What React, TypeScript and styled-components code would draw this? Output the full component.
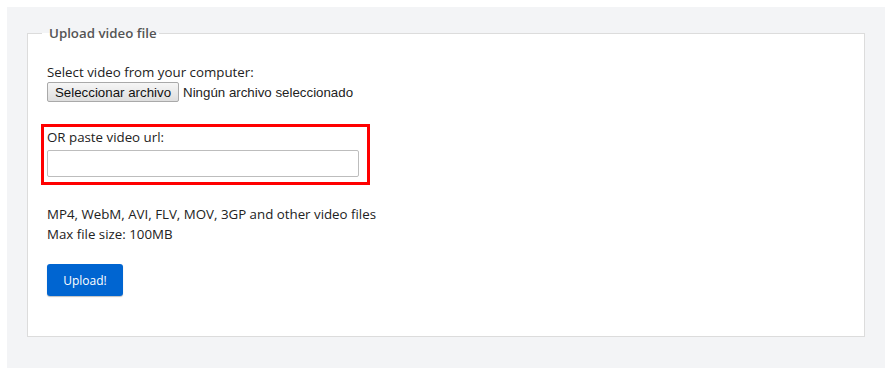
import styled, { createGlobalStyle } from 'styled-components';

const GlobalStyle = createGlobalStyle`
  body {
    margin: 7px 8px 7px 7px;
    background: #fff;
    font-family: 'Open Sans', 'Noto Sans', sans-serif;
    color: #222;
  }
`;

const Panel = styled.div`
  background: #f3f4f6;
  padding: 17px 20px 31px 20px;
`;

const Fieldset = styled.fieldset`
  margin: 0;
  background: #fff;
  border: 1px solid #dcdcdc;
  padding: 20px 19px 40px 19px;
`;

const Legend = styled.legend`
  margin-left: -5px;
  padding: 0 2px 0 7px;
  font-size: 13.3px;
  font-weight: 600;
  color: #555;
`;

const Line = styled.div`
  font-size: 13.3px;
  line-height: 20px;
`;

const FileRow = styled.div`
  display: flex;
  align-items: center;
  gap: 4px;
  font-family: 'Liberation Sans', Arial, sans-serif;
  font-size: 13.3px;
`;

const FileButton = styled.button`
  font-family: 'Liberation Sans', Arial, sans-serif;
  font-size: 13.3px;
  height: 20px;
  padding: 0 7px;
  border: 1px solid #a9a9a9;
  border-radius: 2px;
  background: linear-gradient(#f6f6f6, #dedede);
  color: #111;
`;

const Highlight = styled.div`
  margin: 22px 0 0 -6px;
  width: 312px;
  border: 3px solid #f00;
  padding: 0 8px 5px 3px;
`;

const UrlInput = styled.input`
  display: block;
  box-sizing: border-box;
  width: 100%;
  height: 27px;
  margin-top: 3px;
  border: 1px solid #bdbdbd;
  border-radius: 2px;
`;

const Notes = styled.div`
  margin-top: 19px;
`;

const UploadButton = styled.button`
  margin-top: 20px;
  width: 76px;
  height: 32px;
  background: #0065d1;
  border: none;
  border-radius: 3px;
  color: #fff;
  font-family: 'Open Sans', 'Noto Sans', sans-serif;
  font-size: 12px;
  box-shadow: 0 1px 1px rgba(0, 0, 0, 0.25);
`;

export default function App() {
  return (
    <>
      <GlobalStyle />
      <Panel>
        <Fieldset>
          <Legend>Upload video file</Legend>
          <Line>Select video from your computer:</Line>
          <FileRow>
            <FileButton>Seleccionar archivo</FileButton>
            <span>Ningún archivo seleccionado</span>
          </FileRow>
          <Highlight>
            <Line>OR paste video url:</Line>
            <UrlInput type="text" />
          </Highlight>
          <Notes>
            <Line>MP4, WebM, AVI, FLV, MOV, 3GP and other video files</Line>
            <Line>Max file size: 100MB</Line>
          </Notes>
          <UploadButton>Upload!</UploadButton>
        </Fieldset>
      </Panel>
    </>
  );
}
